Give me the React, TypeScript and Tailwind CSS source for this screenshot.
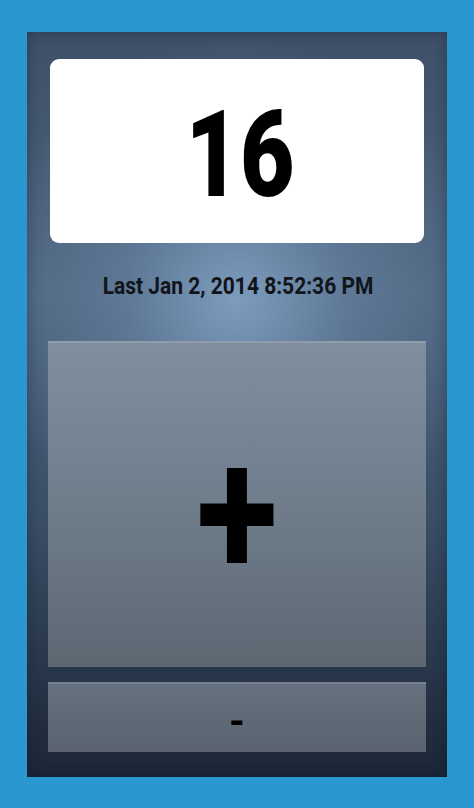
import React from "react";

export default function App() {
  return (
    <div className="w-[474px] h-[808px] bg-[#2a97d1] pt-[32px] pb-[31px] px-[27px] flex" style={{ fontFamily: "Roboto, 'Liberation Sans', sans-serif" }}>
      <div className="flex-1 flex flex-col px-[21px] pt-[27px] pb-[25px] bg-[radial-gradient(ellipse_60%_35%_at_50%_36%,rgba(130,162,196,0.9)_0%,rgba(110,140,172,0.5)_45%,rgba(80,105,135,0)_100%),linear-gradient(180deg,#3e5068_0%,#4d647e_35%,#3a4e66_65%,#1c2636_100%)] shadow-[inset_0_0_14px_rgba(10,20,35,0.35)]">
        <div className="mx-[2px] h-[184px] bg-white rounded-[9px] flex items-center justify-center">
          <span className="text-[94px] font-black text-black leading-none scale-y-[1.28] translate-x-[3px] translate-y-[4px]">16</span>
        </div>
        <div className="h-[98px] flex items-center justify-center pb-[12px]">
          <span className="text-[21px] font-bold text-[#111418] leading-none scale-y-[1.15] translate-x-[1px]">Last Jan 2, 2014 8:52:36 PM</span>
        </div>
        <button className="h-[326px] bg-[linear-gradient(180deg,#7f8fa0_0%,#6f7d8b_50%,#5d6772_100%)] border-t-2 border-[#8e9cab] flex items-center justify-center">
          <span className="text-[150px] font-bold text-black leading-none scale-y-[1.22] translate-y-[9px]">+</span>
        </button>
        <button className="mt-[15px] h-[70px] bg-[linear-gradient(180deg,#65717e_0%,#5a636f_100%)] border-t-2 border-[#76828f] flex items-center justify-center">
          <span className="text-[40px] font-bold text-black leading-none translate-y-[4px]">-</span>
        </button>
      </div>
    </div>
  );
}
